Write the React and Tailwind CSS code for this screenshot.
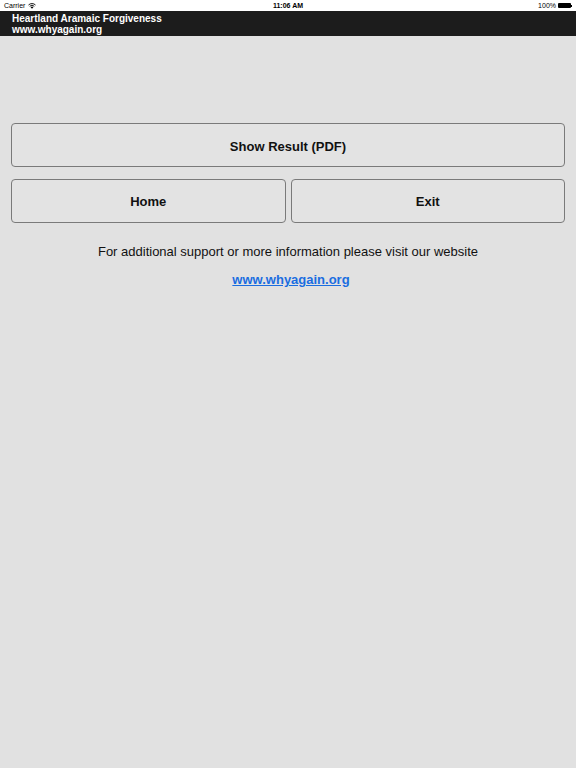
export default function App() {
  return (
    <div className="min-h-screen w-full bg-[#e1e1e1] font-['Liberation_Sans',Arial,sans-serif]">
      {/* status bar */}
      <div className="relative flex h-[11px] items-center justify-between bg-white px-[4px] text-[7px] leading-none text-black">
        <div className="flex items-center gap-[3px]">
          <span>Carrier</span>
          <svg width="8" height="6" viewBox="0 0 16 12">
            <path d="M8 11.5 L5.2 8.4 A4 4 0 0 1 10.8 8.4 Z" fill="#000" />
            <path d="M3.4 6.6 A6.6 6.6 0 0 1 12.6 6.6" stroke="#000" strokeWidth="1.8" fill="none" />
            <path d="M1 4 A10 10 0 0 1 15 4" stroke="#000" strokeWidth="1.8" fill="none" />
          </svg>
        </div>
        <span className="absolute left-1/2 -translate-x-1/2 font-bold">11:06 AM</span>
        <div className="flex items-center gap-[2px]">
          <span>100%</span>
          <div className="flex items-center">
            <div className="h-[5px] w-[13px] rounded-[1px] bg-black" />
            <div className="h-[2px] w-[1px] bg-black" />
          </div>
        </div>
      </div>

      {/* title bar */}
      <div className="flex h-[25px] flex-col justify-center bg-[#1c1c1c] px-[12px] text-[10px] font-bold leading-[11px] text-white">
        <span>Heartland Aramaic Forgiveness</span>
        <span>www.whyagain.org</span>
      </div>

      <div className="px-[11px] pt-[87px]">
        <button className="flex h-[44px] w-full items-center justify-center rounded-[4px] border border-[#7a7a7a] bg-[#e3e3e3] pt-[3px] text-[13px] font-bold text-[#111]">
          Show Result (PDF)
        </button>
        <div className="mt-[12px] flex gap-[5px]">
          <button className="flex h-[44px] flex-1 items-center justify-center rounded-[4px] border border-[#7a7a7a] bg-[#e3e3e3] pt-[2px] text-[13px] font-bold text-[#111]">
            Home
          </button>
          <button className="flex h-[44px] flex-1 items-center justify-center rounded-[4px] border border-[#7a7a7a] bg-[#e3e3e3] pt-[2px] text-[13px] font-bold text-[#111]">
            Exit
          </button>
        </div>
        <p className="mt-[21px] text-center text-[13px] leading-[15px] text-[#111]">
          For additional support or more information please visit our website
        </p>
        <p className="mt-[13px] pl-[6px] text-center text-[13px] leading-[15px]">
          <a href="#" className="font-bold text-[#1a6de0] underline">
            www.whyagain.org
          </a>
        </p>
      </div>
    </div>
  );
}
